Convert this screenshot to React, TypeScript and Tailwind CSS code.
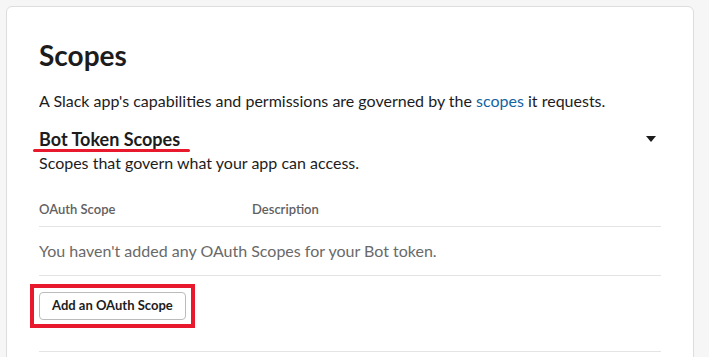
import React from 'react';

const App = () => {
  return (
    <div className="min-h-screen bg-[#f6f6f6] pt-[6px] pl-[6px] pr-[15px] font-['Lato','Liberation_Sans',sans-serif] text-[#1d1c1d]">
      <div className="bg-white border border-[#dddddd] rounded-[6px] px-8 pt-[30px] pb-8 h-[400px]">
        <h2 className="text-[28px] font-bold leading-[36px]">Scopes</h2>
        <p className="mt-[17px] text-[16px] leading-[22px]">
          A Slack app's capabilities and permissions are governed by the{' '}
          <a className="text-[#1264a3]">scopes</a> it requests.
        </p>

        <div className="mt-[15px] flex items-start justify-between">
          <div>
            <div className="relative inline-block">
              <h3 className="text-[18px] font-bold leading-[24px]">Bot Token Scopes</h3>
              <div className="absolute left-[-6px] right-[-10px] top-[22px] h-[3px] rounded-full bg-[#e8192c]" />
            </div>
            <p className="text-[16px] leading-[22px]">Scopes that govern what your app can access.</p>
          </div>
          <svg width="10" height="7" viewBox="0 0 10 7" className="mt-[9px] mr-[5px]">
            <path d="M0 0 H10 L5 6 Z" fill="#1d1c1d" />
          </svg>
        </div>

        <div className="mt-[26px] flex text-[13px] font-semibold text-[#616061] leading-[18px] pb-[8px] border-b border-[#e4e4e4]">
          <div className="w-[213px]">OAuth Scope</div>
          <div>Description</div>
        </div>
        <div className="py-[13px] text-[16px] text-[#696969] leading-[22px] border-b border-[#e4e4e4]">
          You haven't added any OAuth Scopes for your Bot token.
        </div>

        <div className="mt-[8px] ml-[-9px] inline-block border-4 border-[#e8192c] px-[5px] py-[4px]">
          <button className="h-[28px] px-[12px] rounded-[4px] border border-[#bbbbbb] bg-white text-[13px] font-bold text-[#1d1c1d]">
            Add an OAuth Scope
          </button>
        </div>
        <div className="mt-[23px] border-b border-[#e4e4e4]" />
      </div>
    </div>
  );
};

export default App;
